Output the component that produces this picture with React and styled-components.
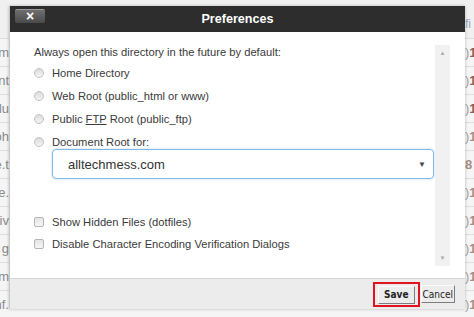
import React from 'react';
import styled, { createGlobalStyle } from 'styled-components';

const leftTails = ['m', 'nt', 'lu', 'oh', 'e.t', 'e.', 'iv', 'g', 'm', 'nf.'];
const rightHeads = [')1', ')1', ')1', ')1', '8', ')1', ')1', ')1', ')1', ')1'];

export default function App() {
    return (
        <>
            <GlobalStyle />
            <Page>
                <FileTable>
                    <HeaderRow>
                        <LeftCell />
                        <HeadCell>fi</HeadCell>
                    </HeaderRow>
                    {leftTails.map((tail, i) => (
                        <Row key={i}>
                            <LeftCell>{tail}</LeftCell>
                            <RightCell $strong={i < 3}>
                                {rightHeads[i] === '8' ? '8' : <><Paren>)</Paren>1</>}
                            </RightCell>
                        </Row>
                    ))}
                </FileTable>

                <Dialog>
                    <Header>
                        <CloseButton>×</CloseButton>
                        <Title>Preferences</Title>
                        <span />
                    </Header>

                    <Body>
                        <Content>
                            <Intro>Always open this directory in the future by default:</Intro>
                            <Options>
                                <Option><Radio /><Label>Home Directory</Label></Option>
                                <Option><Radio /><Label>Web Root (public_html or www)</Label></Option>
                                <Option><Radio /><Label>Public <Abbr>FTP</Abbr> Root (public_ftp)</Label></Option>
                                <Option><Radio /><Label>Document Root for:</Label></Option>
                            </Options>
                            <Select>
                                <span>alltechmess.com</span>
                                <Caret>▼</Caret>
                            </Select>
                            <Checks>
                                <Option><Check /><Label>Show Hidden Files (dotfiles)</Label></Option>
                                <Option><Check /><Label>Disable Character Encoding Verification Dialogs</Label></Option>
                            </Checks>
                        </Content>
                        <Scrollbar>
                            <Arrow>▲</Arrow>
                            <Arrow>▼</Arrow>
                        </Scrollbar>
                    </Body>

                    <Footer>
                        <Highlight>
                            <Button $primary>Save</Button>
                        </Highlight>
                        <Button>Cancel</Button>
                    </Footer>
                </Dialog>
            </Page>
        </>
    );
}

const GlobalStyle = createGlobalStyle`
    body {
        margin: 0;
        background: #f3f3f3;
        font-family: "Liberation Sans", Arial, sans-serif;
    }
`;

const Page = styled.div`
    position: relative;
    width: 474px;
    height: 317px;
    overflow: hidden;
    background: #f3f3f3;
`;

const FileTable = styled.div`
    display: flex;
    flex-direction: column;
`;

const HeaderRow = styled.div`
    height: 39px;
    box-sizing: border-box;
    display: flex;
    justify-content: space-between;
    align-items: center;
    padding-top: 9px;
    background: #f0f0f0;
    border-bottom: 1px solid #dcdcdc;
`;

const Row = styled.div`
    height: 28px;
    box-sizing: border-box;
    display: flex;
    justify-content: space-between;
    align-items: center;
    background: #f5f5f5;
    border-bottom: 1px solid #dedede;
`;

const LeftCell = styled.div`
    width: 9px;
    overflow: hidden;
    display: flex;
    justify-content: flex-end;
    white-space: nowrap;
    font-size: 13px;
    color: #8a8a8a;
`;

const HeadCell = styled.div`
    width: 9px;
    overflow: hidden;
    white-space: nowrap;
    font-size: 12px;
    color: #8fa6bd;
`;

const RightCell = styled.div`
    width: 9px;
    overflow: hidden;
    white-space: nowrap;
    font-size: 13px;
    font-weight: bold;
    color: ${p => (p.$strong ? '#8e5f55' : '#a58c86')};
`;

const Paren = styled.span`
    font-weight: normal;
    color: #9aa3ad;
`;

const Dialog = styled.div`
    position: absolute;
    left: 9px;
    top: 6px;
    width: 456px;
    height: 303px;
    display: flex;
    flex-direction: column;
    background: #fff;
    border-left: 1px solid #c9c9c9;
    box-sizing: border-box;
    box-shadow: 0 0 3px rgba(0, 0, 0, 0.25);
`;

const Header = styled.div`
    height: 26px;
    flex-shrink: 0;
    display: grid;
    grid-template-columns: 1fr auto 1fr;
    align-items: center;
    background: #2d2d2d;
`;

const CloseButton = styled.div`
    justify-self: start;
    align-self: start;
    margin: 3px 0 0 5px;
    width: 30px;
    height: 14px;
    box-sizing: border-box;
    border-radius: 2px;
    border-top: 1px solid #9a9a9a;
    background: linear-gradient(#6e6e6e, #4a4a4a);
    color: #fff;
    font-weight: bold;
    font-size: 14px;
    line-height: 12px;
    text-align: center;
`;

const Title = styled.div`
    color: #fff;
    font-weight: bold;
    font-size: 12.6px;
`;

const Body = styled.div`
    flex: 1;
    display: flex;
    padding: 13px 15px 12px 0;
    min-height: 0;
`;

const Content = styled.div`
    flex: 1;
    display: flex;
    flex-direction: column;
    padding-left: 24px;
    color: #3a3a3a;
    font-size: 11.2px;
`;

const Intro = styled.div`
    line-height: 14px;
`;

const Options = styled.div`
    display: flex;
    flex-direction: column;
    gap: 9px;
    margin-top: 7px;
`;

const Option = styled.div`
    height: 14px;
    display: flex;
    align-items: center;
    gap: 8px;
`;

const Label = styled.span`
    white-space: nowrap;
`;

const Radio = styled.span`
    width: 10px;
    height: 10px;
    box-sizing: border-box;
    border-radius: 50%;
    border: 1px solid #c2c2c2;
    background: linear-gradient(#dcdcdc, #f4f4f4);
    flex-shrink: 0;
`;

const Check = styled.span`
    width: 10px;
    height: 10px;
    box-sizing: border-box;
    border-radius: 2px;
    border: 1px solid #b5b5b5;
    background: linear-gradient(#e4e4e4, #f6f6f6);
    flex-shrink: 0;
`;

const Abbr = styled.span`
    text-decoration: underline;
`;

const Select = styled.div`
    margin: 0 1px 0 18px;
    height: 30px;
    box-sizing: border-box;
    display: flex;
    align-items: center;
    justify-content: space-between;
    padding: 0 7px 0 15px;
    border: 1px solid #7fb8e6;
    border-radius: 4px;
    box-shadow: 0 0 2px rgba(102, 175, 233, 0.6);
    font-size: 13px;
    color: #333;
`;

const Caret = styled.span`
    font-size: 8px;
    color: #444;
`;

const Checks = styled.div`
    display: flex;
    flex-direction: column;
    gap: 8px;
    margin-top: 36px;
`;

const Scrollbar = styled.div`
    width: 15px;
    display: flex;
    flex-direction: column;
    justify-content: space-between;
    align-items: center;
    padding: 5px 0 5px;
    box-sizing: border-box;
    background: #f1f1f1;
`;

const Arrow = styled.span`
    font-size: 6px;
    color: #a8a8a8;
`;

const Footer = styled.div`
    height: 31px;
    flex-shrink: 0;
    box-sizing: border-box;
    display: flex;
    justify-content: flex-end;
    align-items: center;
    gap: 1px;
    padding: 0 10px 0 0;
    background: #ececec;
    border-top: 1px solid #d6d6d6;
`;

const Highlight = styled.div`
    display: flex;
    padding: 2px 3px 1px;
    border: 2px solid #e0141e;
`;

const Button = styled.div`
    height: 18px;
    box-sizing: border-box;
    display: flex;
    align-items: center;
    justify-content: center;
    padding: 0 ${p => (p.$primary ? '5px' : '1px')};
    min-width: ${p => (p.$primary ? '36px' : '32px')};
    background: #ececec;
    border: 1px solid;
    border-color: #fbfbfb #7d7d7d #7d7d7d #fbfbfb;
    font-family: "DejaVu Sans Condensed", "DejaVu Sans", sans-serif;
    font-size: 10px;
    font-weight: ${p => (p.$primary ? 'bold' : 'normal')};
    color: #222;
`;
